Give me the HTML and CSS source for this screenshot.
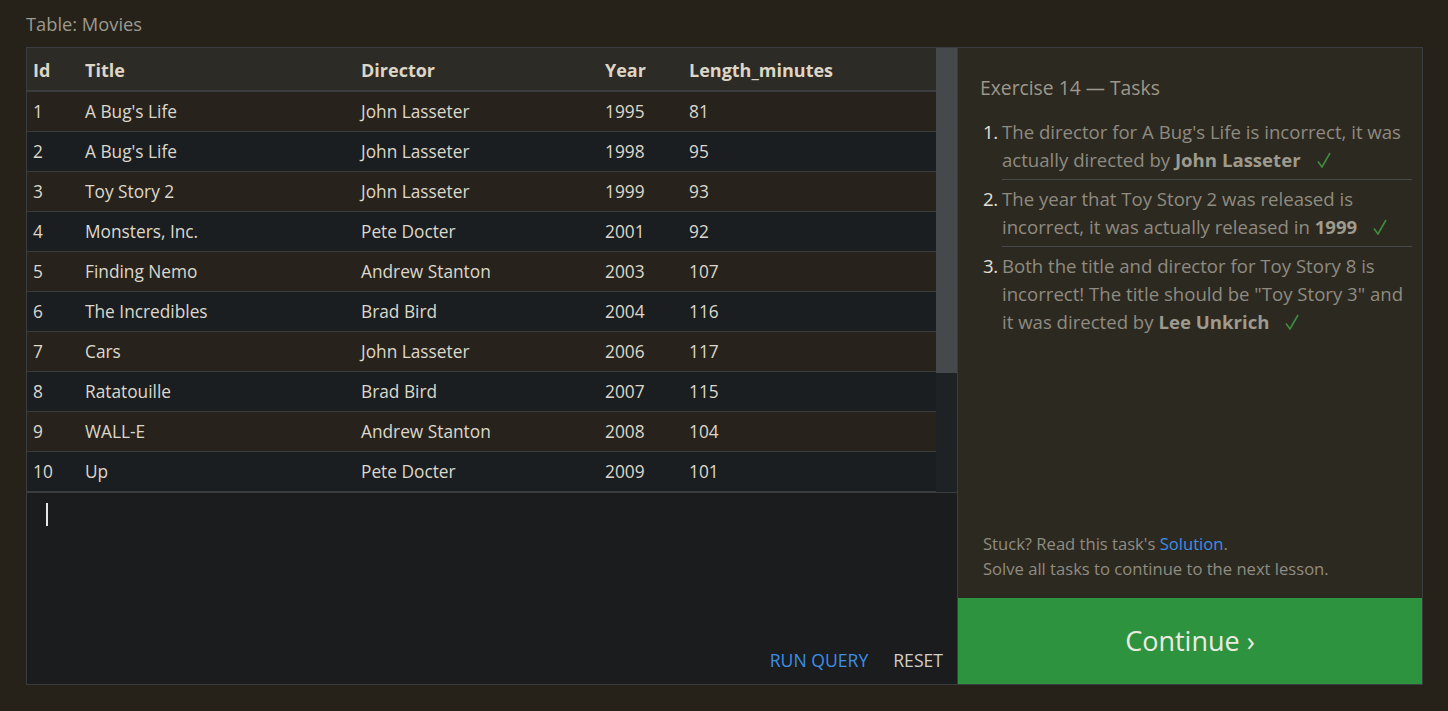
FILE: index.html
```html
<!DOCTYPE html>
<html>
<head>
<meta charset="utf-8">
<link rel="stylesheet" href="styles.css">
</head>
<body>
<div class="page-title">Table: Movies</div>
<div class="app">
  <div class="left">
    <div class="table-wrap">
      <div class="table-scroll">
        <table class="grid">
          <thead>
            <tr><th class="c-id">Id</th><th class="c-title">Title</th><th class="c-dir">Director</th><th class="c-year">Year</th><th>Length_minutes</th></tr>
          </thead>
          <tbody>
            <tr><td>1</td><td>A Bug's Life</td><td>John Lasseter</td><td>1995</td><td>81</td></tr>
            <tr><td>2</td><td>A Bug's Life</td><td>John Lasseter</td><td>1998</td><td>95</td></tr>
            <tr><td>3</td><td>Toy Story 2</td><td>John Lasseter</td><td>1999</td><td>93</td></tr>
            <tr><td>4</td><td>Monsters, Inc.</td><td>Pete Docter</td><td>2001</td><td>92</td></tr>
            <tr><td>5</td><td>Finding Nemo</td><td>Andrew Stanton</td><td>2003</td><td>107</td></tr>
            <tr><td>6</td><td>The Incredibles</td><td>Brad Bird</td><td>2004</td><td>116</td></tr>
            <tr><td>7</td><td>Cars</td><td>John Lasseter</td><td>2006</td><td>117</td></tr>
            <tr><td>8</td><td>Ratatouille</td><td>Brad Bird</td><td>2007</td><td>115</td></tr>
            <tr><td>9</td><td>WALL-E</td><td>Andrew Stanton</td><td>2008</td><td>104</td></tr>
            <tr><td>10</td><td>Up</td><td>Pete Docter</td><td>2009</td><td>101</td></tr>
          </tbody>
        </table>
      </div>
      <div class="scrollbar"><div class="thumb"></div></div>
    </div>
    <div class="editor">
      <div class="cursor"></div>
      <div class="actions">
        <span class="run">RUN QUERY</span>
        <span class="reset">RESET</span>
      </div>
    </div>
  </div>
  <div class="right">
    <div class="tasks">
      <div class="tasks-title">Exercise 14 — Tasks</div>
      <ol class="task-list">
        <li><span class="num">1.</span><span class="txt">The director for A Bug's Life is incorrect, it was actually directed by <b>John Lasseter</b><svg class="check" width="14" height="16" viewBox="0 0 14 16"><polyline points="1,9.5 5,15 13,1" fill="none" stroke="#3f8c3f" stroke-width="1.6"/></svg></span></li>
        <li><span class="num">2.</span><span class="txt">The year that Toy Story 2 was released is incorrect, it was actually released in <b>1999</b><svg class="check" width="14" height="16" viewBox="0 0 14 16"><polyline points="1,9.5 5,15 13,1" fill="none" stroke="#3f8c3f" stroke-width="1.6"/></svg></span></li>
        <li><span class="num">3.</span><span class="txt">Both the title and director for Toy Story 8 is incorrect! The title should be "Toy Story 3" and it was directed by <b>Lee Unkrich</b><svg class="check" width="14" height="16" viewBox="0 0 14 16"><polyline points="1,9.5 5,15 13,1" fill="none" stroke="#3f8c3f" stroke-width="1.6"/></svg></span></li>
      </ol>
      <div class="help">
        <div>Stuck? Read this task's <span class="link">Solution</span>.</div>
        <div>Solve all tasks to continue to the next lesson.</div>
      </div>
    </div>
    <div class="continue">Continue ›</div>
  </div>
</div>
</body>
</html>
```

FILE: styles.css
```css
html, body {
  margin: 0;
  padding: 0;
  background: #262219;
  height: 100%;
}
body {
  font-family: "Open Sans", "Noto Sans", sans-serif;
  padding: 12px 25px 0 26px;
  box-sizing: border-box;
}
.page-title {
  color: #9c9a90;
  font-size: 18.3px;
  line-height: 24px;
  margin-bottom: 11px;
}
.app {
  display: flex;
  border: 1px solid #3a3d3f;
  height: 638px;
  box-sizing: border-box;
}
.left {
  width: 930px;
  flex: 0 0 930px;
  display: flex;
  flex-direction: column;
  border-right: 1px solid #3a3d3f;
}
.table-wrap {
  display: flex;
  height: 444px;
}
.table-scroll {
  flex: 1;
}
.grid {
  width: 100%;
  border-collapse: collapse;
  font-size: 17.3px;
  color: #ddd8cc;
}
.grid th, .grid td {
  text-align: left;
  padding: 0 0 0 7px;
  white-space: nowrap;
}
.grid th {
  height: 40px;
  padding-top: 2px;
  background: #2d2b25;
  font-weight: 700;
  font-size: 18px;
  color: #ddd5c5;
  border-bottom: 2px solid #3a3c3e;
}
.grid td {
  height: 39px;
  border-bottom: 1px solid #3a3c3e;
}
.grid td:first-child, .grid th:first-child { padding-left: 6px; }
.grid tbody tr:nth-child(odd) td { background: #27231c; }
.grid tbody tr:nth-child(even) td { background: #1b1e20; }
.c-id { width: 45px; }
.c-title { width: 269px; }
.c-dir { width: 237px; }
.c-year { width: 77px; }
.scrollbar {
  width: 21px;
  margin-left: -1px;
  background: #1f2224;
}
.thumb {
  height: 325px;
  background: #45494c;
}
.editor {
  flex: 1;
  background: #1a1c1e;
  display: flex;
  flex-direction: column;
  justify-content: space-between;
  border-top: 1px solid #3a3c3e;
}
.cursor {
  width: 2px;
  height: 23px;
  background: #e6e6e6;
  margin: 10px 0 0 19px;
}
.actions {
  display: flex;
  justify-content: flex-end;
  gap: 25px;
  padding: 0 14px 13px 0;
  font-size: 17.6px;
  line-height: 22px;
}
.run { color: #3d8fe6; }
.reset { color: #d2d0ca; }
.right {
  flex: 1;
  background: #2c2920;
  display: flex;
  flex-direction: column;
}
.tasks {
  flex: 1;
  padding: 27px 10px 0 22px;
  display: flex;
  flex-direction: column;
}
.tasks-title {
  color: #9d988b;
  font-size: 19.3px;
  line-height: 26px;
  margin-bottom: 13px;
}
.task-list {
  list-style: none;
  margin: 0;
  padding: 0;
  font-size: 18.6px;
  line-height: 28px;
  color: #8f8b80;
}
.task-list li {
  display: flex;
  padding: 4px 0 6px;
}
.num {
  width: 19px;
  flex: 0 0 19px;
  color: #e4e0d6;
  padding-left: 3px;
  letter-spacing: -0.5px;
}
.txt {
  flex: 1;
}
.task-list li:not(:last-child) .txt {
  border-bottom: 1px solid #454b4d;
  padding-bottom: 5px;
  margin-bottom: -5px;
}
.txt b {
  color: #9e9a8d;
  font-weight: 700;
}
.check {
  margin-left: 16px;
  vertical-align: -1px;
}
.help {
  margin-top: auto;
  padding: 0 0 17px 3px;
  font-size: 16.6px;
  line-height: 25px;
  color: #8f8c82;
}
.link { color: #3d8fe6; }
.continue {
  height: 86px;
  background: #2e933f;
  color: #ebebe2;
  font-size: 27px;
  display: flex;
  align-items: center;
  justify-content: center;
  padding-bottom: 2px;
  box-sizing: border-box;
}
```
